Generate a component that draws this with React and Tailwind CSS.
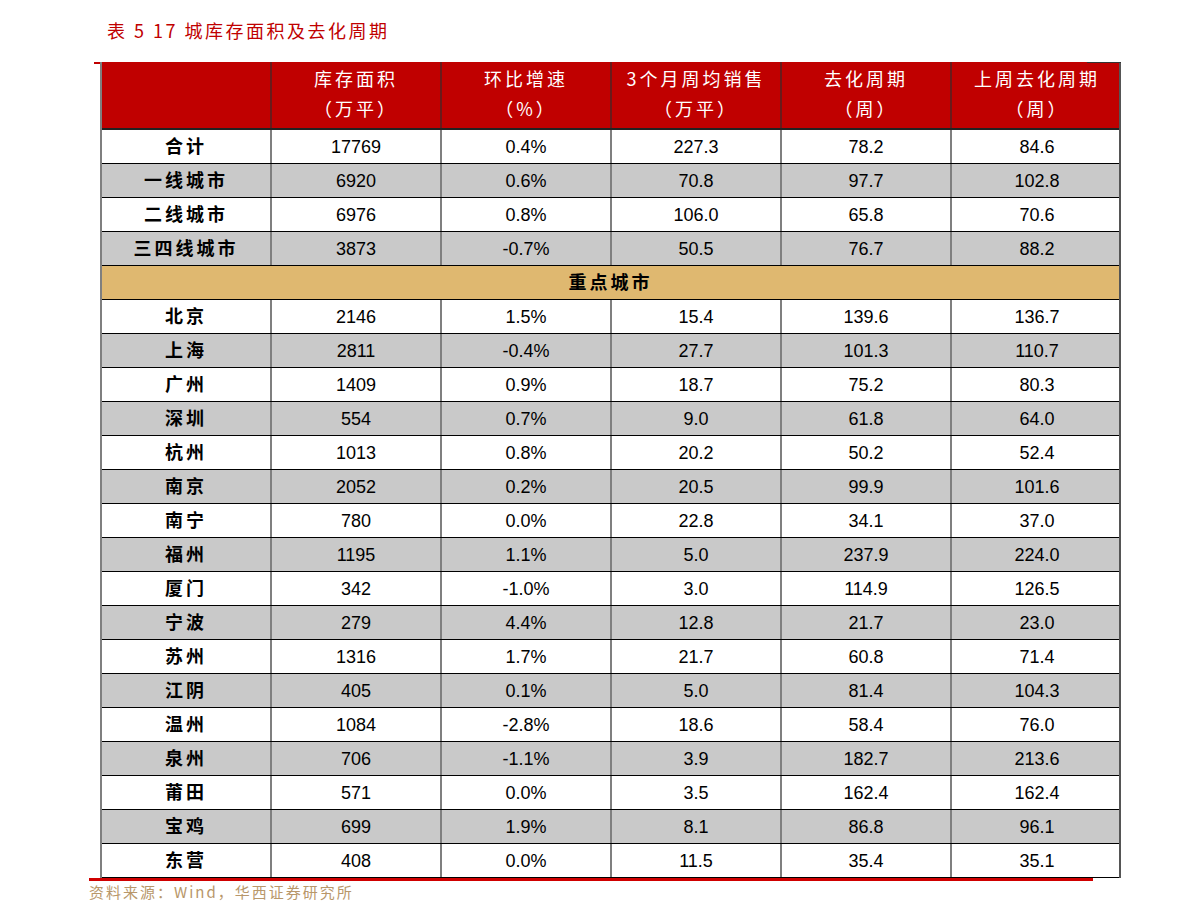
import React from 'react';

const summary = [
  ['合计', '17769', '0.4%', '227.3', '78.2', '84.6'],
  ['一线城市', '6920', '0.6%', '70.8', '97.7', '102.8'],
  ['二线城市', '6976', '0.8%', '106.0', '65.8', '70.6'],
  ['三四线城市', '3873', '-0.7%', '50.5', '76.7', '88.2'],
];

const cities = [
  ['北京', '2146', '1.5%', '15.4', '139.6', '136.7'],
  ['上海', '2811', '-0.4%', '27.7', '101.3', '110.7'],
  ['广州', '1409', '0.9%', '18.7', '75.2', '80.3'],
  ['深圳', '554', '0.7%', '9.0', '61.8', '64.0'],
  ['杭州', '1013', '0.8%', '20.2', '50.2', '52.4'],
  ['南京', '2052', '0.2%', '20.5', '99.9', '101.6'],
  ['南宁', '780', '0.0%', '22.8', '34.1', '37.0'],
  ['福州', '1195', '1.1%', '5.0', '237.9', '224.0'],
  ['厦门', '342', '-1.0%', '3.0', '114.9', '126.5'],
  ['宁波', '279', '4.4%', '12.8', '21.7', '23.0'],
  ['苏州', '1316', '1.7%', '21.7', '60.8', '71.4'],
  ['江阴', '405', '0.1%', '5.0', '81.4', '104.3'],
  ['温州', '1084', '-2.8%', '18.6', '58.4', '76.0'],
  ['泉州', '706', '-1.1%', '3.9', '182.7', '213.6'],
  ['莆田', '571', '0.0%', '3.5', '162.4', '162.4'],
  ['宝鸡', '699', '1.9%', '8.1', '86.8', '96.1'],
  ['东营', '408', '0.0%', '11.5', '35.4', '35.1'],
];

const headers = [
  ['', ''],
  ['库存面积', '（万平）'],
  ['环比增速', '（%）'],
  ['3个月周均销售', '（万平）'],
  ['去化周期', '（周）'],
  ['上周去化周期', '（周）'],
];

const cjk = { fontFamily: '"Noto Sans CJK SC", sans-serif' };
const num = { fontFamily: '"Liberation Sans", "Noto Sans CJK SC", sans-serif' };

function Row({ cells, gray }) {
  return (
    <div className={`grid grid-cols-[170px_170px_170px_170px_170px_170px] h-[34px] border-b border-black ${gray ? 'bg-[#c9c9c9]' : 'bg-white'}`}>
      {cells.map((c, i) => (
        <div
          key={i}
          className={`flex items-center justify-center text-black ${i < 5 ? 'border-r-2 border-[#7f7f7f]' : ''} ${i === 0 ? 'text-[18px] font-bold tracking-[3px] pb-[3px]' : 'text-[18px] pt-[1px]'}`}
          style={i === 0 ? cjk : num}
        >
          {c}
        </div>
      ))}
    </div>
  );
}

export default function App() {
  return (
    <div className="w-[1191px] h-[921px] bg-white relative overflow-hidden">
      <div className="h-[62px] pl-[107px] pt-[18px]">
        <div className="text-[18px] leading-[24px] text-[#c00000] tracking-[2.5px]" style={cjk}>
          表 5 17 城库存面积及去化周期
        </div>
      </div>

      <div className="relative ml-[100px] w-[1021px]">
        <span className="absolute left-[-6px] top-0 w-[6px] h-[2px] bg-[#c00000]" />
        <span className="absolute left-[987px] top-0 w-[34px] h-[1px] bg-[#333]" />
        <span className="absolute left-[-11px] bottom-[-3px] w-[1004px] h-[3px] bg-[#d00000]" />

        <div className="border-l-2 border-r-2 border-l-[#7f7f7f] border-r-[#555]">
          <div className="grid grid-cols-[170px_170px_170px_170px_170px_170px] h-[68px] bg-[#c00000] border-b-2 border-[#222]">
            {headers.map((h, i) => (
              <div
                key={i}
                className={`flex flex-col items-center justify-center pb-[4px] text-white text-[18px] leading-[30px] tracking-[3px] ${i < 5 ? 'border-r-2 border-[#6a1a1a]' : ''}`}
                style={cjk}
              >
                <span>{h[0]}</span>
                <span>{h[1]}</span>
              </div>
            ))}
          </div>

          {summary.map((r, i) => (
            <Row key={r[0]} cells={r} gray={i % 2 === 1} />
          ))}

          <div className="h-[34px] bg-[#dfb870] border-b border-black flex items-center justify-center pb-[3px] text-[18px] font-bold tracking-[3px] text-black" style={cjk}>
            重点城市
          </div>

          {cities.map((r, i) => (
            <Row key={r[0]} cells={r} gray={i % 2 === 1} />
          ))}
        </div>
      </div>

      <div className="pl-[89px] pt-[4px] text-[15px] leading-[20px] text-[#b8976a] tracking-[2px]" style={cjk}>
        资料来源：Wind，华西证券研究所
      </div>
    </div>
  );
}
